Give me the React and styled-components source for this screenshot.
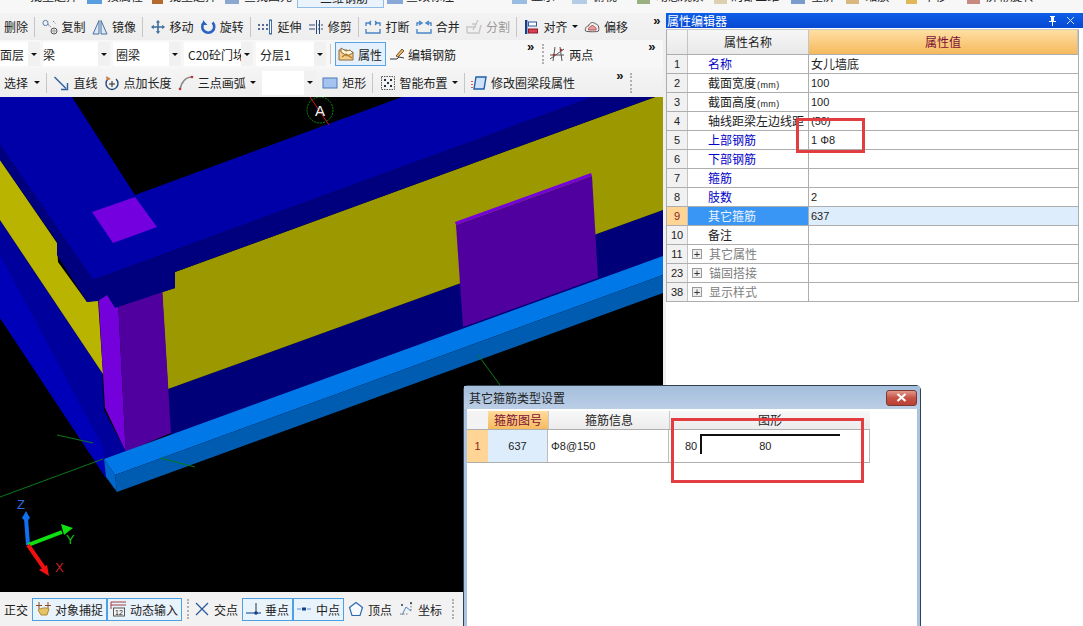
import styled, { createGlobalStyle } from "styled-components";

const Global = createGlobalStyle`
  html, body { margin: 0; padding: 0; background: #fff; overflow: hidden; }
  body { font-family: "Noto Sans CJK SC", "Liberation Sans", sans-serif; font-size: 12px; color: #222; }
`;

const Page = styled.div`
  position: relative;
  width: 1083px;
  height: 626px;
  overflow: hidden;
  background: #fff;
  display: flex;
  flex-direction: column;
`;

/* top strip, almost entirely scrolled off the capture */
const TopStrip = styled.div`
  height: 13px;
  flex: none;
  display: flex;
  overflow: hidden;
  background: #f7f7f7;
`;
const TopItem = styled.div`
  margin-left: ${(p) => p.$ml}px;
  margin-top: -11px;
  height: 13px;
  line-height: 13px;
  white-space: nowrap;
  flex: none;
  color: #222;
`;
const TopIcon = styled.div`
  margin-left: ${(p) => p.$ml}px;
  margin-top: -11px;
  width: ${(p) => p.$w}px;
  height: 15px;
  flex: none;
  background: ${(p) => p.$color};
`;
const TopActive = styled.div`
  margin-left: ${(p) => p.$ml}px;
  margin-top: -3px;
  width: ${(p) => p.$w}px;
  height: 11px;
  flex: none;
  box-sizing: border-box;
  border: 1px solid #8fbde8;
  background: #eaf3fc;
  padding-left: 22px;
  white-space: nowrap;
  line-height: 0;
`;

const Body = styled.div`
  flex: 1;
  display: flex;
  min-height: 0;
`;
const LeftColumn = styled.div`
  width: 663px;
  flex: none;
  display: flex;
  flex-direction: column;
`;
const Gutter = styled.div`
  width: 3px;
  flex: none;
  background: #efefef;
`;

const Toolbar = styled.div`
  height: ${(p) => p.$h}px;
  flex: none;
  display: flex;
  align-items: center;
  gap: ${(p) => p.$gap ?? 6.3}px;
  padding-left: ${(p) => p.$pl ?? 4}px;
  background: ${(p) => p.$bg};
  white-space: nowrap;
  overflow: hidden;
`;
const Tool = styled.div`
  display: flex;
  align-items: center;
  gap: ${(p) => p.$gap ?? 4}px;
  flex: none;
  height: 100%;
  color: ${(p) => (p.$muted ? "#9a9a9a" : "#222")};
`;
const ActiveTool = styled.div`
  display: flex;
  align-items: center;
  gap: 4px;
  flex: none;
  height: 24px;
  padding: 0 3px 0 2px;
  box-sizing: border-box;
  border: 1px solid #55a5e6;
  background: #e4f0fb;
`;
const Sep = styled.div`
  width: 1px;
  height: 20px;
  flex: none;
  background: #c6c6c6;
  margin: 0 ${(p) => p.$m ?? 0}px;
`;
const Grip = styled.div`
  width: 0;
  height: 20px;
  flex: none;
  border-left: 2px dotted #b0b0b0;
  margin-left: ${(p) => p.$m ?? 0}px;
  margin-right: ${(p) => p.$mr ?? p.$m ?? 0}px;
`;
const Caret = styled.span`
  width: 0;
  height: 0;
  flex: none;
  border-left: 3px solid transparent;
  border-right: 3px solid transparent;
  border-top: 3px solid #111;
`;
const Chevron = styled.span`
  flex: none;
  margin-left: ${(p) => p.$ml ?? 0}px;
  font: bold 13px/10px "Liberation Sans", sans-serif;
  align-self: flex-start;
  margin-top: ${(p) => p.$mt ?? 3}px;
  color: #111;
`;
const Combo = styled.div`
  width: ${(p) => p.$w}px;
  height: 24px;
  flex: none;
  box-sizing: border-box;
  display: flex;
  align-items: center;
  background: #fff;
  padding-left: ${(p) => p.$pl ?? 0}px;
  overflow: hidden;
  white-space: nowrap;
`;
const ComboText = styled.span`
  flex: 1;
  overflow: hidden;
`;
const ComboButton = styled.span`
  width: 12px;
  height: 100%;
  flex: none;
  display: flex;
  align-items: center;
  justify-content: center;
  background: #f1f1f1;
`;

const Viewport = styled.div`
  height: 495px;
  flex: none;
  background: #000;
  line-height: 0;
`;

const StatusBar = styled.div`
  flex: 1;
  display: flex;
  align-items: center;
  padding-left: 4px;
  gap: 4px;
  background: #f2f2f2;
  white-space: nowrap;
  overflow: hidden;
`;
const StatusItem = styled.div`
  height: 23px;
  box-sizing: border-box;
  padding: ${(p) => (p.$active ? "0 3px 0 2px" : "0")};
  margin-left: ${(p) => p.$ml ?? 0}px;
  flex: none;
  display: flex;
  align-items: center;
  gap: 4px;
  border: ${(p) => (p.$active ? "1px solid #4da0e4" : "none")};
  background: ${(p) => (p.$active ? "#e9f3fc" : "transparent")};
`;

/* property panel */
const Panel = styled.div`
  flex: 1;
  min-width: 0;
  background: #fff;
  display: flex;
  flex-direction: column;
`;
const PanelTitle = styled.div`
  height: 15px;
  flex: none;
  background: linear-gradient(#0f5fe8, #0748d2);
  color: #fff;
  font-size: 12px;
  line-height: 15px;
  padding-left: 1px;
  display: flex;
  align-items: center;
  justify-content: space-between;
`;
const TitleButtons = styled.div`
  display: flex;
  align-items: center;
  gap: 9px;
  padding-right: 8px;
  line-height: 0;
`;
const Grid = styled.div`
  margin-top: 1px;
  width: 413px;
  box-sizing: border-box;
  border-left: 1px solid #adadad;
  border-right: 1px solid #adadad;
  border-top: 1px solid #c8c8c8;
`;
const GridRow = styled.div`
  display: grid;
  grid-template-columns: 21px 121px 1fr;
  height: ${(p) => p.$h ?? 19}px;
  box-sizing: border-box;
  border-bottom: 1px solid #aeaeae;
`;
const Num = styled.div`
  background: ${(p) => (p.$active ? "#ffd596" : "#f1f1f1")};
  color: ${(p) => (p.$active ? "#8a1c1c" : "#222")};
  border-right: 1px solid #c4c4c4;
  font: 11px/18px "Liberation Sans", sans-serif;
  text-align: center;
`;
const HeadCell = styled.div`
  background: ${(p) => (p.$hot ? "linear-gradient(#ffdfa3, #f5b95e)" : "linear-gradient(#f6f6f6, #e9e9e9)")};
  color: ${(p) => (p.$hot ? "#7b0f34" : "#222")};
  border-right: 1px solid #c4c4c4;
  text-align: center;
  line-height: 23px;
  font-size: 12px;
`;
const NameCell = styled.div`
  display: flex;
  align-items: center;
  padding-left: ${(p) => (p.$tree ? 4 : 20)}px;
  gap: 7px;
  line-height: 18px;
  white-space: nowrap;
  border-right: 1px solid #aeaeae;
  color: ${(p) => p.$color};
  background: ${(p) => (p.$active ? "#3a96f4" : "#fff")};
`;
const ValueCell = styled.div`
  padding-left: 2px;
  font: ${(p) => (p.$cjk ? `12px/18px "Noto Sans CJK SC", sans-serif` : `11px/18px "Liberation Sans", sans-serif`)};
  background: ${(p) => (p.$active ? "#deedfc" : "transparent")};
  white-space: nowrap;
  overflow: hidden;
`;
const Small = styled.span`
  font: 9px "Liberation Sans", sans-serif;
  padding-left: 1px;
  letter-spacing: 0.4px;
`;
const Plus = styled.span`
  width: 10px;
  height: 10px;
  box-sizing: border-box;
  flex: none;
  border: 1px solid #9a9a9a;
  background: #eee;
  color: #333;
  font: 11px/8px "Liberation Sans", sans-serif;
  text-align: center;
`;

/* floating dialog */
const Dialog = styled.div`
  position: absolute;
  left: 463px;
  top: 385px;
  width: 458px;
  height: 260px;
  box-sizing: border-box;
  border: 1px solid #33414f;
  border-radius: 5px 5px 0 0;
  background: #a9c3e0;
  padding: 0 3px;
`;
const DialogTitle = styled.div`
  height: 23px;
  display: flex;
  align-items: center;
  justify-content: space-between;
  padding: 0 3px 0 5px;
  color: #222;
  background: linear-gradient(#a4bedc, #bbcee6);
  margin: 0 -3px;
`;
const CloseButton = styled.div`
  width: 31px;
  height: 16px;
  box-sizing: border-box;
  border: 1px solid #7c3a34;
  border-radius: 3px;
  background: linear-gradient(#e29a8c, #c65245 50%, #b84234);
  display: flex;
  align-items: center;
  justify-content: center;
  line-height: 0;
`;
const DialogBody = styled.div`
  background: #fff;
  height: 232px;
  padding-top: 2px;
`;
const DialogRow = styled.div`
  display: grid;
  grid-template-columns: 21px 60px 121px 201px;
  width: 403px;
  height: ${(p) => p.$h}px;
  box-sizing: border-box;
  border-bottom: 1px solid #aeaeae;
`;
const DialogNum = styled.div`
  background: ${(p) => (p.$head ? "#f3f3f3" : "#ffd596")};
  color: #8a1c1c;
  font: 11px/32px "Liberation Sans", sans-serif;
  text-align: center;
`;
const DialogHead = styled.div`
  background: ${(p) => (p.$hot ? "linear-gradient(#ffdc9c, #f6ba60)" : "linear-gradient(#f8f8f8, #ececec)")};
  color: ${(p) => (p.$hot ? "#7b0f34" : "#222")};
  border-left: ${(p) => (p.$hot ? "none" : "1px solid #c8c8c8")};
  text-align: center;
  line-height: 18px;
`;
const DialogCell = styled.div`
  background: ${(p) => p.$bg ?? "#fff"};
  border-right: 1px solid #bcbcbc;
  padding-left: ${(p) => p.$pl ?? 0}px;
  text-align: ${(p) => p.$align ?? "left"};
  font: 11px/32px "Liberation Sans", sans-serif;
  white-space: nowrap;
`;
const ShapeCell = styled.div`
  display: flex;
  align-items: flex-start;
  padding: 4px 0 0 16px;
  gap: 3px;
  border-right: 1px solid #bcbcbc;
  font: 11px "Liberation Sans", sans-serif;
`;
const ShapeLabel = styled.span`
  line-height: 24px;
`;
const Stirrup = styled.div`
  width: 126px;
  height: 18px;
  border-top: 2px solid #111;
  border-left: 2px solid #111;
  text-align: center;
  line-height: 20px;
  padding-right: 12px;
`;

/* red markup rectangles drawn over the screenshot */
const Markup = styled.div`
  position: absolute;
  left: ${(p) => p.$x}px;
  top: ${(p) => p.$y}px;
  width: ${(p) => p.$w}px;
  height: ${(p) => p.$h}px;
  box-sizing: border-box;
  border: 3px solid #e23e42;
  pointer-events: none;
`;

const Svg = styled.svg`
  flex: none;
  display: block;
`;

const icons = {
  copy: (
    <>
      <circle cx="3.5" cy="4" r="2.6" fill="none" stroke="#5a7fa8" />
      <circle cx="12" cy="12" r="3" fill="none" stroke="#555" />
      <circle cx="12" cy="12" r="1.2" fill="none" stroke="#999" />
      <path d="M6 5.5l3 2.5M11 2l2.5 2.5" stroke="#777" fill="none" strokeDasharray="2 1" />
    </>
  ),
  mirror: <path d="M7 1.5V15H1zM9 1.5V15h6z" fill="#dce8f5" stroke="#4a70a0" />,
  move: (
    <path d="M8 1l2.2 2.6H8.8V7.2h3.4V5.8L15 8l-2.8 2.2V8.8H8.8v3.4h1.4L8 15l-2.2-2.8h1.4V8.8H3.8v1.4L1 8l2.8-2.2v1.4h3.4V3.6H5.8z" fill="#3f6d9f" />
  ),
  rotate: (
    <>
      <path d="M4 3.5a6 6 0 1 0 8.5 0" fill="none" stroke="#2b62c4" strokeWidth="2.6" />
      <path d="M3 1v5h4.4z" fill="#2b62c4" />
    </>
  ),
  extend: (
    <>
      <path d="M1 6h2M5 6h2M9 6h2M1 10h2M5 10h2M9 10h2" stroke="#24427a" strokeWidth="1.4" />
      <rect x="12.5" y="1" width="2" height="14" fill="#fff" stroke="#3f6da4" strokeWidth="1" />
    </>
  ),
  trim: (
    <path d="M1 6h6M1 10h6M10 6h1M10 10h1M13 6h2M13 10h2M8.5 1v14M11.5 1v14" stroke="#2a4a7d" strokeWidth="1" fill="none" />
  ),
  break: (
    <path d="M1 7V4h5M10 4h5v3M1 10v4h14v-4M6 2l-2 2 2 2M10 2l2 2-2 2" stroke="#4a86c8" strokeWidth="1.4" fill="none" />
  ),
  join: (
    <path d="M1 7V4h5M10 4h5v3M1 10v4h14v-4M3 2l3 2-3 2M13 2l-3 2 3 2" stroke="#4a86c8" strokeWidth="1.4" fill="none" />
  ),
  split: <path d="M1 14V8h9M1 14h12l2-8M12 1L7 11M6 5h5" stroke="#c8c8c8" strokeWidth="1.5" fill="none" />,
  align: (
    <>
      <rect x="1" y="1" width="2.4" height="14" fill="#123f88" />
      <rect x="4.5" y="3" width="8" height="4" fill="#fff" stroke="#2a5aa5" />
      <rect x="4.5" y="10" width="9" height="4" fill="#d94050" stroke="#8b1a2a" />
    </>
  ),
  offset: (
    <>
      <path d="M1.5 12c-1-4 2-5 3-5 .5-3 5-5 7-2 2.500 0 4 3 3 7 0 1-12 1-13 0z" fill="#f0f0f0" stroke="#555" />
      <path d="M4.500 11c-.5-2 1-3 2-3 .5-2 3-2 4 0 1 0 2 1 1.500 3z" fill="#e2a0a0" stroke="#b55" />
    </>
  ),
  attr: (
    <>
      <path d="M1 4h8l2 2h4v8H1z" fill="#f4ce8a" stroke="#8d6b3a" />
      <path d="M3 2l5 3 4-1 3 3-6 3-6-4z" fill="#fff4d8" stroke="#8d6b3a" />
      <path d="M4 11l4-3 6 4" stroke="#b37a26" fill="none" strokeWidth="1.4" />
    </>
  ),
  rebar: (
    <>
      <path d="M1 13h7l2-2 5 1" stroke="#333" fill="none" />
      <path d="M7 10l6-7 2 2-6 6z" fill="#e0b468" stroke="#7d5a28" />
    </>
  ),
  twoPoint: (
    <>
      <path d="M1 13L15 3M4 15L6 1M13 15L11 1M1 9h14" stroke="#555" fill="none" />
      <circle cx="5" cy="9" r="1.3" fill="#a33" />
      <circle cx="12" cy="4" r="1.3" fill="#a33" />
    </>
  ),
  line: (
    <>
      <path d="M1.500 2L13 13.500" stroke="#2f5f9e" strokeWidth="1.4" />
      <path d="M14.500 8v6.500H8" stroke="#2f5f9e" strokeWidth="1.4" fill="none" />
    </>
  ),
  pointLength: (
    <>
      <path d="M4 4a6 6 0 1 0 8 0" fill="none" stroke="#224a7a" strokeWidth="1.4" />
      <path d="M2 1l.8 4.500L7 4z" fill="#c87838" />
      <path d="M8 6v6M5 9h6" stroke="#222" />
    </>
  ),
  arc: (
    <>
      <path d="M2 15C3 7 8 2 14 2" fill="none" stroke="#8a8a8a" strokeWidth="1.600" />
      <circle cx="2" cy="14" r="1.300" fill="#b33" />
      <circle cx="14" cy="2" r="1.300" fill="#b33" />
    </>
  ),
  rect: <rect x="1" y="3" width="14" height="10" fill="#a4c4ef" stroke="#4c78b8" />,
  smart: (
    <>
      <rect x="1.500" y="1.500" width="13" height="13" fill="#f2f2f2" stroke="#555" strokeDasharray="1.500 1" />
      <path d="M4 4h2v2H4zM10 4h2v2h-2zM4 10h2v2H4zM10 10h2v2h-2zM7 7h2v2H7z" fill="#234" />
    </>
  ),
  modify: (
    <>
      <path d="M5 2h10l-2 12H3z" fill="#cfe2f7" stroke="#1f5fa8" strokeWidth="1.400" />
      <path d="M1 6v1M1 9v1M1 12v1" stroke="#d33" strokeWidth="1.600" />
    </>
  ),
  snap: (
    <>
      <path d="M4 1v7M13 1v7" stroke="#8a4a20" />
      <path d="M1 4.500h6M10 4.500h6" stroke="#8a4a20" />
      <path d="M3 9c3-2 8-3 11-1l-2 6H6z" fill="#e4c468" stroke="#b08a30" />
    </>
  ),
  dynamic: (
    <>
      <path d="M1 1h15M1 4h15M1 1v7" stroke="#a04040" fill="none" />
      <rect x="3.500" y="7" width="11" height="8" fill="#f6f6f6" stroke="#555" />
      <text x="9" y="14" textAnchor="middle" fontSize="7" fontFamily="Liberation Sans" fill="#111">12</text>
    </>
  ),
  cross: <path d="M2 2L14 14M14 2L2 14" stroke="#2a5a9a" strokeWidth="1.300" />,
  perp: (
    <>
      <path d="M1 12h15" stroke="#2a5a9a" strokeWidth="1.200" />
      <path d="M11 2v10" stroke="#333" />
      <circle cx="11" cy="12" r="1.800" fill="#123f88" />
    </>
  ),
  mid: (
    <>
      <path d="M1 8h4M11 8h4" stroke="#5b8ccc" strokeWidth="1.200" />
      <rect x="6" y="6.500" width="4" height="3" fill="#123f88" />
    </>
  ),
  vertex: <path d="M8 1.500l6.500 5-2.500 8H4l-2.500-8z" fill="#f6fafe" stroke="#2a6ab0" strokeWidth="1.200" />,
  coord: (
    <>
      <path d="M4 14L8 6l5 4" stroke="#4a86c8" fill="none" />
      <path d="M13 2v9M2 13h9" stroke="#777" strokeDasharray="1.500 1.500" fill="none" />
      <circle cx="4" cy="4" r="1" fill="#234" />
      <circle cx="13" cy="2" r="1" fill="#234" />
    </>
  ),
};

function Icon({ name, size = 16 }) {
  return (
    <Svg width={size} height={size} viewBox="0 0 16 16">
      {icons[name]}
    </Svg>
  );
}

function Scene() {
  return (
    <svg width="663" height="495" viewBox="0 97 663 495">
      <rect x="0" y="97" width="663" height="495" fill="#000" />
      {/* lower wall band */}
      <polygon points="168,389 663,210 663,258 171,436" fill="#000078" />
      {/* olive wall */}
      <polygon points="162,292 175,288 175,272 655,97 663,97 663,210 168,389" fill="#9c9800" />
      {/* left wall */}
      <polygon points="0,220 102,372 104,410 126,452 104,459 106,478 0,318" fill="#00009c" />
      <polygon points="0,255 103,447 104,459 106,478 0,318" fill="#0000b8" />
      <polygon points="0,160 57,243 58,262 87,302 98,300 103,374 0,220" fill="#b8b400" />
      {/* columns, their tops run in behind the beam */}
      <polygon points="98,290 118,300 125,437 126,452 105,408" fill="#7400dc" />
      <polygon points="118,300 162,285 171,433 126,452 125,437" fill="#50009e" />
      <polygon points="455,222 591,173 592,176 456,225" fill="#7400dc" />
      <polygon points="456,225 592,176 598,278 463,327" fill="#50009e" />
      {/* beam fascia and top */}
      <polygon points="0,145 93,280 593,97 655,97 175,272 175,288 115,308 107,295 98,301 87,302 57,255 57,242 0,160" fill="#00007e" />
      <polygon points="0,97 72,97 135,195 402,97 593,97 93,280 0,145" fill="#0000a8" />
      <polygon points="92,212 135,197 157,227 113,243" fill="#7400e0" />
      {/* slab edge */}
      <polygon points="104,459 663,256 663,275 115,475" fill="#0078e8" />
      <polygon points="115,475 663,275 663,293 117,492" fill="#005cb0" />
      <polygon points="104,459 115,475 117,492 106,477" fill="#0068cc" />
      {/* axis lines */}
      <path d="M0 497L103 459M57 435L93 443M160 458L195 467M478 355L500 385" stroke="#0b7a1a" strokeWidth="1" fill="none" />
      {/* grid bubble */}
      <circle cx="320" cy="110" r="13" fill="none" stroke="#0e8a22" strokeWidth="1" strokeDasharray="2 1" />
      <path d="M310 97L329 125" stroke="#d01818" />
      <text x="320" y="116" textAnchor="middle" fontSize="15" fontFamily="Liberation Sans" fill="#f2f2f2">A</text>
      {/* view gizmo */}
      <path d="M28 545L26 518" stroke="#1070f0" strokeWidth="4" />
      <path d="M26 511l-4 7 4 4 4-4z" fill="#1070f0" />
      <path d="M28 545L62 532" stroke="#10e010" strokeWidth="4" />
      <path d="M73 528l-12 -4 3 11z" fill="#10e010" />
      <path d="M28 545L44 568" stroke="#f01010" strokeWidth="4" />
      <path d="M49 576l-10-6 8-5z" fill="#f01010" />
      <text x="17" y="509" fontSize="13" fontFamily="Liberation Sans" fill="#2a6ee0">Z</text>
      <text x="66" y="544" fontSize="13" fontFamily="Liberation Sans" fill="#18c018">Y</text>
      <text x="55" y="572" fontSize="13" fontFamily="Liberation Sans" fill="#c82020">X</text>
    </svg>
  );
}

const topItems = [
  { ml: 30, text: "批量选择" },
  { ml: 9, icon: "#5a9ede", w: 15 },
  { ml: 5, text: "按属性" },
  { ml: 9, icon: "#b56a30", w: 11 },
  { ml: 6, text: "批量选择" },
  { ml: 8, icon: "#8aa8d0", w: 14 },
  { ml: 5, text: "查找图元" },
  { active: true, ml: 5, w: 87, text: "三维钢筋" },
  { ml: 3, icon: "#88a8d8", w: 16 },
  { ml: 3, text: "查改标注" },
  { ml: 58, icon: "#9abce0", w: 15 },
  { ml: 4, text: "显示" },
  { ml: 17, icon: "#b4cce6", w: 15 },
  { ml: 6, text: "俯视" },
  { ml: 20, icon: "#9ab080", w: 13 },
  { ml: 6, text: "动态观察" },
  { ml: 10, icon: "#dcd0b0", w: 13 },
  { ml: 4, text: "局部三维" },
  { ml: 12, icon: "#7a9ccc", w: 14 },
  { ml: 6, text: "全屏" },
  { ml: 11, icon: "#d8b880", w: 13 },
  { ml: 6, text: "缩放" },
  { ml: 17, icon: "#e0b858", w: 11 },
  { ml: 6, text: "平移" },
  { ml: 20, icon: "#c88a80", w: 13 },
  { ml: 6, text: "屏幕旋转" },
];

const row1 = [
  ["copy", "复制"], ["mirror", "镜像"], "|", ["move", "移动"], ["rotate", "旋转"], "|",
  ["extend", "延伸"], ["trim", "修剪"], "|", ["break", "打断"], ["join", "合并"],
];

const properties = [
  { n: 1, name: "名称", color: "#0000c8", value: "女儿墙底", cjk: true },
  { n: 2, name: "截面宽度", unit: true, color: "#222", value: "100" },
  { n: 3, name: "截面高度", unit: true, color: "#222", value: "100" },
  { n: 4, name: "轴线距梁左边线距", color: "#222", value: "(50)" },
  { n: 5, name: "上部钢筋", color: "#0000c8", value: "1 Φ8" },
  { n: 6, name: "下部钢筋", color: "#0000c8", value: "" },
  { n: 7, name: "箍筋", color: "#0000c8", value: "" },
  { n: 8, name: "肢数", color: "#0000c8", value: "2" },
  { n: 9, name: "其它箍筋", color: "#eaf4ff", value: "637", active: true },
  { n: 10, name: "备注", color: "#222", value: "" },
  { n: 11, name: "其它属性", color: "#808080", value: "", tree: true },
  { n: 23, name: "锚固搭接", color: "#808080", value: "", tree: true },
  { n: 38, name: "显示样式", color: "#808080", value: "", tree: true },
];

export default function App() {
  return (
    <Page>
      <Global />

      <TopStrip>
        {topItems.map((item, i) => {
          if (item.active) return <TopActive key={i} $ml={item.ml} $w={item.w}>{item.text}</TopActive>;
          if (item.icon) return <TopIcon key={i} $ml={item.ml} $w={item.w} $color={item.icon} />;
          return <TopItem key={i} $ml={item.ml}>{item.text}</TopItem>;
        })}
      </TopStrip>

      <Body>
        <LeftColumn>
          <Toolbar $h={27} $bg="linear-gradient(#f3f3f3, #eeeeee)">
            <Tool>删除</Tool>
            <Sep />
            {row1.map((t, i) =>
              t === "|" ? (
                <Sep key={i} />
              ) : (
                <Tool key={i}>
                  <Icon name={t[0]} />
                  {t[1]}
                </Tool>
              )
            )}
            <Tool $muted>
              <Icon name="split" />
              分割
            </Tool>
            <Sep />
            <Tool>
              <Icon name="align" />
              对齐
              <Caret />
            </Tool>
            <Tool>
              <Icon name="offset" />
              偏移
            </Tool>
            <Chevron $ml={19} $mt={3}>»</Chevron>
          </Toolbar>

          <Toolbar $h={28} $bg="#f7f7f7" $gap={3} $pl={0}>
            <Combo $w={40}><ComboText>面层</ComboText><ComboButton><Caret /></ComboButton></Combo>
            <Combo $w={67}><ComboText>梁</ComboText><ComboButton><Caret /></ComboButton></Combo>
            <Combo $w={68} $pl={3}><ComboText>圈梁</ComboText><ComboButton><Caret /></ComboButton></Combo>
            <Combo $w={69} $pl={4}><ComboText>C20砼门垛</ComboText><ComboButton><Caret /></ComboButton></Combo>
            <Combo $w={70} $pl={4}><ComboText>分层1</ComboText><ComboButton><Caret /></ComboButton></Combo>
            <Sep $m={1} />
            <ActiveTool>
              <Icon name="attr" />
              属性
            </ActiveTool>
            <Tool $gap={3}>
              <Icon name="rebar" />
              编辑钢筋
            </Tool>
            <Chevron $ml={68} $mt={2}>»</Chevron>
            <Grip $m={5} $mr={2} />
            <Tool>
              <Icon name="twoPoint" />
              两点
            </Tool>
            <Chevron $ml={52} $mt={2}>»</Chevron>
          </Toolbar>

          <Toolbar $h={29} $bg="linear-gradient(#f5f5f5, #eeeeee)" $gap={6.2}>
            <Tool $gap={6}>选择<Caret /></Tool>
            <Sep />
            <Tool>
              <Icon name="line" />
              直线
            </Tool>
            <Tool>
              <Icon name="pointLength" />
              点加长度
            </Tool>
            <Tool>
              <Icon name="arc" />
              三点画弧
              <Caret />
            </Tool>
            <Combo $w={54}><ComboText /><ComboButton><Caret /></ComboButton></Combo>
            <Tool>
              <Icon name="rect" />
              矩形
            </Tool>
            <Sep />
            <Tool>
              <Icon name="smart" />
              智能布置
              <Caret />
            </Tool>
            <Sep />
            <Tool>
              <Icon name="modify" />
              修改圈梁段属性
            </Tool>
            <Chevron $ml={35} $mt={3}>»</Chevron>
            <Grip />
          </Toolbar>

          <Viewport>
            <Scene />
          </Viewport>

          <StatusBar>
            <StatusItem>正交</StatusItem>
            <StatusItem $active>
              <Icon name="snap" />
              对象捕捉
            </StatusItem>
            <StatusItem $active $ml={-4}>
              <Icon name="dynamic" />
              动态输入
            </StatusItem>
            <Grip $m={1} />
            <StatusItem>
              <Icon name="cross" />
              交点
            </StatusItem>
            <StatusItem $active>
              <Icon name="perp" />
              垂点
            </StatusItem>
            <StatusItem $active $ml={-4}>
              <Icon name="mid" />
              中点
            </StatusItem>
            <StatusItem>
              <Icon name="vertex" />
              顶点
            </StatusItem>
            <StatusItem $ml={2}>
              <Icon name="coord" />
              坐标
            </StatusItem>
            <Grip $m={6} />
          </StatusBar>
        </LeftColumn>

        <Gutter />

        <Panel>
          <PanelTitle>
            属性编辑器
            <TitleButtons>
              <svg width="9" height="10" viewBox="0 0 9 10">
                <path d="M2 0h5v1H6v4h2v1H5v4H4V6H1V5h2V1H2z" fill="#fff" />
              </svg>
              <svg width="9" height="9" viewBox="0 0 9 9">
                <path d="M1 1l7 7M8 1L1 8" stroke="#cfe0ff" fill="none" />
              </svg>
            </TitleButtons>
          </PanelTitle>
          <Grid>
            <GridRow $h={25}>
              <HeadCell />
              <HeadCell>属性名称</HeadCell>
              <HeadCell $hot>属性值</HeadCell>
            </GridRow>
            {properties.map((p) => (
              <GridRow key={p.n}>
                <Num $active={p.active}>{p.n}</Num>
                <NameCell $color={p.color} $active={p.active} $tree={p.tree}>
                  {p.tree && <Plus>+</Plus>}
                  <span>
                    {p.name}
                    {p.unit && <Small>(mm)</Small>}
                  </span>
                </NameCell>
                <ValueCell $active={p.active} $cjk={p.cjk}>{p.value}</ValueCell>
              </GridRow>
            ))}
          </Grid>
        </Panel>
      </Body>

      <Markup $x={796} $y={118} $w={69} $h={35} />

      <Dialog>
        <DialogTitle>
          其它箍筋类型设置
          <CloseButton>
            <svg width="11" height="9" viewBox="0 0 11 9">
              <path d="M1.500 1l8 7M9.500 1l-8 7" stroke="#fff" strokeWidth="2.200" />
            </svg>
          </CloseButton>
        </DialogTitle>
        <DialogBody>
          <DialogRow $h={19}>
            <DialogNum $head />
            <DialogHead $hot>箍筋图号</DialogHead>
            <DialogHead>箍筋信息</DialogHead>
            <DialogHead>图形</DialogHead>
          </DialogRow>
          <DialogRow $h={33}>
            <DialogNum>1</DialogNum>
            <DialogCell $bg="#deedfc" $align="center">637</DialogCell>
            <DialogCell $pl={3}>Φ8@150</DialogCell>
            <ShapeCell>
              <ShapeLabel>80</ShapeLabel>
              <Stirrup>80</Stirrup>
            </ShapeCell>
          </DialogRow>
        </DialogBody>
      </Dialog>

      <Markup $x={671} $y={418} $w={193} $h={65} />
    </Page>
  );
}
